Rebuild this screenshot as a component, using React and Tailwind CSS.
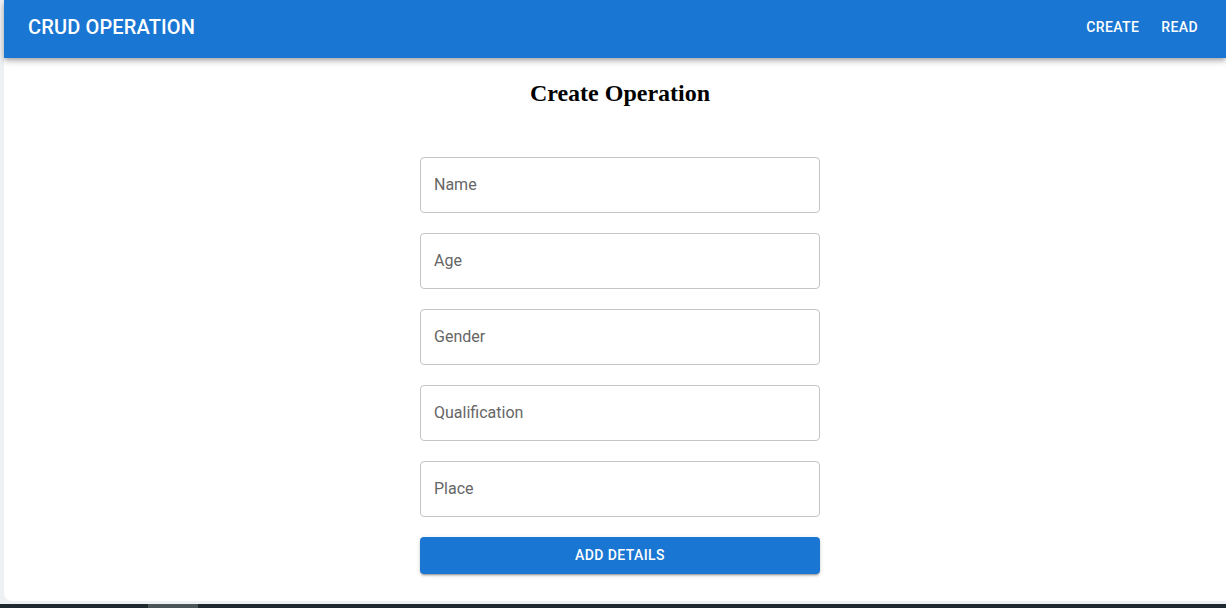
import React, { useState } from 'react';

const fields = ['Name', 'Age', 'Gender', 'Qualification', 'Place'];

const App = () => {
  const [form, setForm] = useState({});

  const handleChange = (e) => {
    const { name, value } = e.target;
    setForm(prev => ({ ...prev, [name]: value }));
  };

  return (
    <div className="h-[608px] w-[1226px] flex flex-col bg-[#eef1f3] overflow-hidden">
      <div className="flex-1 flex pl-[4px] pb-[3px]">
        <div className="flex-1 flex flex-col bg-white rounded-bl-[8px]">
          {/* app bar */}
          <header className="h-[58px] bg-[#1976d2] text-white flex items-center justify-between pl-[24px] pr-[20px] shadow-[0_2px_4px_-1px_rgba(0,0,0,0.2),0_4px_5px_0_rgba(0,0,0,0.14),0_1px_10px_0_rgba(0,0,0,0.12)] relative z-10">
            <h1 className="text-[20px] font-medium tracking-[0.15px] leading-none pb-[4px]" style={{ fontFamily: 'Roboto, sans-serif' }}>
              CRUD OPERATION
            </h1>
            <nav className="flex items-center gap-[6px] pb-[4px]" style={{ fontFamily: 'Roboto, sans-serif' }}>
              <button className="px-[8px] py-[6px] text-[14px] font-medium tracking-[0.4px] uppercase">Create</button>
              <button className="px-[8px] py-[6px] text-[14px] font-medium tracking-[0.4px] uppercase">Read</button>
            </nav>
          </header>

          <main className="flex-1 flex flex-col items-center pl-[10px] pt-[21px]">
            <h2 className="text-[24px] leading-[28px] font-bold text-black" style={{ fontFamily: '"Liberation Serif", serif' }}>
              Create Operation
            </h2>
            <form className="w-[400px] mt-[50px] flex flex-col gap-[20px]" onSubmit={(e) => e.preventDefault()} style={{ fontFamily: 'Roboto, sans-serif' }}>
              {fields.map(f => (
                <input
                  key={f}
                  name={f}
                  value={form[f] || ''}
                  onChange={handleChange}
                  placeholder={f}
                  className="h-[56px] w-full rounded-[4px] border border-[#c4c4c4] px-[13px] pb-[2px] text-[16px] text-black placeholder:text-[#666666] outline-none"
                />
              ))}
              <button
                type="submit"
                className="h-[37px] w-full rounded-[4px] bg-[#1976d2] text-white text-[14px] font-medium tracking-[0.4px] uppercase shadow-[0_3px_1px_-2px_rgba(0,0,0,0.2),0_2px_2px_0_rgba(0,0,0,0.14),0_1px_5px_0_rgba(0,0,0,0.12)]"
              >
                Add Details
              </button>
            </form>
          </main>
        </div>
      </div>
      <div className="h-[4px] bg-[#1e2a30] flex">
        <div className="ml-[148px] w-[50px] bg-[#4b5458]" />
      </div>
    </div>
  );
};

export default App;
